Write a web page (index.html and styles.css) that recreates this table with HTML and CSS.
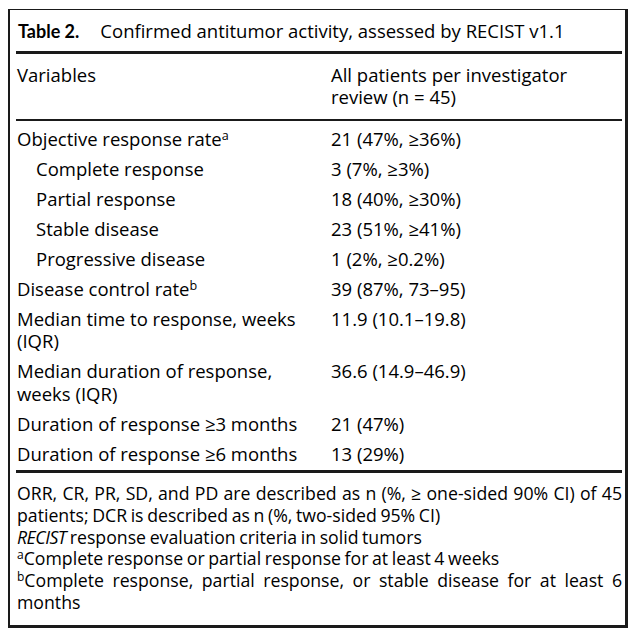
FILE: index.html
```html
<!DOCTYPE html>
<html lang="en">
<head>
<meta charset="utf-8">
<title>Table 2</title>
<link rel="stylesheet" href="styles.css">
</head>
<body>
<div class="frame">
  <div class="title"><span class="label">Table 2.</span>Confirmed antitumor activity, assessed by RECIST v1.1</div>
  <div class="head row">
    <div class="cell">Variables</div>
    <div class="cell">All patients per investigator review (n&nbsp;=&nbsp;45)</div>
  </div>
  <div class="body">
    <div class="row"><div class="cell">Objective response rate<sup>a</sup></div><div class="cell">21 (47%, ≥36%)</div></div>
    <div class="row"><div class="cell sub">Complete response</div><div class="cell">3 (7%, ≥3%)</div></div>
    <div class="row"><div class="cell sub">Partial response</div><div class="cell">18 (40%, ≥30%)</div></div>
    <div class="row"><div class="cell sub">Stable disease</div><div class="cell">23 (51%, ≥41%)</div></div>
    <div class="row"><div class="cell sub">Progressive disease</div><div class="cell">1 (2%, ≥0.2%)</div></div>
    <div class="row"><div class="cell">Disease control rate<sup>b</sup></div><div class="cell">39 (87%, 73–95)</div></div>
    <div class="row"><div class="cell">Median time to response, weeks (IQR)</div><div class="cell">11.9 (10.1–19.8)</div></div>
    <div class="row"><div class="cell">Median duration of response, weeks (IQR)</div><div class="cell">36.6 (14.9–46.9)</div></div>
    <div class="row"><div class="cell">Duration of response ≥3 months</div><div class="cell">21 (47%)</div></div>
    <div class="row"><div class="cell">Duration of response ≥6 months</div><div class="cell">13 (29%)</div></div>
  </div>
  <div class="notes">
    <p>ORR, CR, PR, SD, and PD are described as n (%, ≥ one-sided 90% CI) of 45 patients; DCR is described as n (%, two-sided 95% CI)</p>
    <p><i>RECIST</i> response evaluation criteria in solid tumors</p>
    <p><sup>a</sup>Complete response or partial response for at least 4 weeks</p>
    <p><sup>b</sup>Complete response, partial response, or stable disease for at least 6 months</p>
  </div>
</div>
</body>
</html>
```
FILE: styles.css
```css
html, body {
  margin: 0;
  padding: 0;
  background: #fff;
}
body {
  font-family: "Open Sans", "Noto Sans", sans-serif;
  font-size: 18.5px;
  color: #000;
}
.frame {
  box-sizing: border-box;
  margin: 9px 0 0 8px;
  width: 620px;
  border-style: solid;
  border-color: #1a1a1a;
  border-width: 1px 3px 3px 2px;
  padding: 0 3px 11px 6px;
}
.title {
  line-height: 23px;
  padding: 8.5px 0 8.5px 2px;
  border-bottom: 3px solid #1a1a1a;
}
.label {
  font-family: Lato, "Open Sans", sans-serif;
  font-size: 18px;
  font-weight: 700;
  margin-right: 21px;
}
.row {
  display: grid;
  grid-template-columns: 314px 1fr;
  line-height: 22.5px;
  padding: 3.75px 0;
}
.cell {
  padding-left: 1px;
}
.cell.sub {
  padding-left: 20px;
}
.head {
  padding: 9.8px 0 10.2px;
  border-bottom: 2px solid #1a1a1a;
}
.head .cell:last-child {
  padding-right: 30px;
}
.body {
  padding: 3px 0 1px;
  border-bottom: 3px solid #1a1a1a;
}
.body .cell:first-child {
  padding-right: 10px;
}
sup {
  font-size: 0.68em;
  line-height: 0;
  vertical-align: 0.48em;
}
.notes {
  padding-top: 10px;
  font-size: 17.7px;
  line-height: 21.8px;
  word-spacing: -1px;
}
.notes p {
  margin: 0;
  padding-left: 1px;
  text-align: justify;
}
.notes i {
  letter-spacing: -0.5px;
}
```
